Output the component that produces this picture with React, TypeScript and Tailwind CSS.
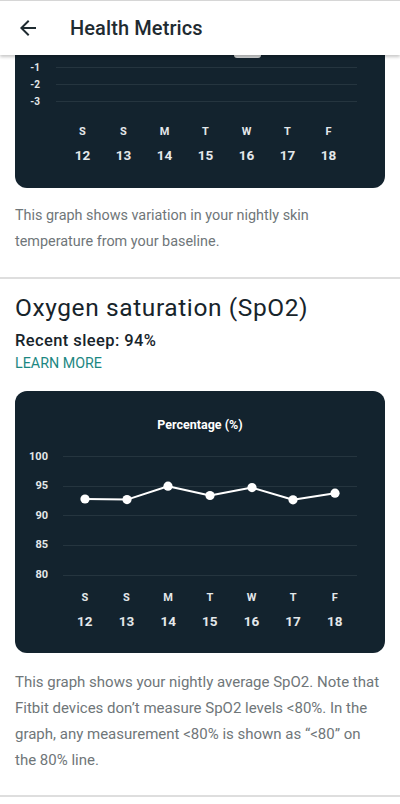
import React from "react";

const days = ["S", "S", "M", "T", "W", "T", "F"];
const dates = ["12", "13", "14", "15", "16", "17", "18"];

const spo2 = [
  { x: 70, y: 57 },
  { x: 112, y: 57.6 },
  { x: 153, y: 44.2 },
  { x: 195, y: 53.5 },
  { x: 237, y: 45.6 },
  { x: 278, y: 57.8 },
  { x: 320, y: 51.2 },
];

const DayAxis = ({ offset, col }: { offset: string; col: string }) => (
  <div className={offset}>
    <div className="flex">
      {days.map((d, i) => (
        <div key={`d${i}`} className={`${col} text-center text-[11px] leading-[14px] font-bold text-[#e4e8ea]`}>
          {d}
        </div>
      ))}
    </div>
    <div className="flex mt-[8px]">
      {dates.map((d) => (
        <div key={d} className={`${col} text-center text-[13.5px] leading-[16px] font-bold text-[#e4e8ea]`}>
          {d}
        </div>
      ))}
    </div>
  </div>
);

export default function App() {
  return (
    <div className="w-[400px] min-h-[804px] bg-white font-['Roboto',sans-serif] overflow-hidden">
      <header className="relative z-10 h-[55px] bg-white border-t border-[#d6d6d6] shadow-[0_2px_3px_rgba(0,0,0,0.22)] flex items-center">
        <div className="w-[70px] pl-[16px] flex items-center">
          <svg width="24" height="24" viewBox="0 0 24 24" fill="#1f2b31">
            <path d="M20 11H7.83l5.59-5.59L12 4l-8 8 8 8 1.41-1.41L7.83 13H20v-2z" />
          </svg>
        </div>
        <h1 className="text-[20px] font-medium text-[#1f2b31] tracking-[0.1px]">Health Metrics</h1>
      </header>

      <main className="px-[15px]">
        {/* skin temperature card, scrolled partly under the header */}
        <div className="bg-[#13232e] rounded-b-[12px] pb-[25px]">
          <div className="ml-[219px] w-[27px] h-[3px] rounded-b-[3px] bg-[#d2d4d5]" />
          <div className="pt-[1px]">
            {["-1", "-2", "-3"].map((l) => (
              <div key={l} className="flex items-center h-[17px]">
                <span className="w-[25px] text-right text-[10px] font-bold text-[#e4e8ea]">{l}</span>
                <div className="ml-[16px] mr-[28px] flex-1 h-px bg-[#25353f]" />
              </div>
            ))}
          </div>
          <DayAxis offset="mt-[15px] pl-[47px]" col="w-[41px]" />
        </div>

        <p className="mt-[15px] text-[14.4px] leading-[26px] text-[#6f7679]">
          This graph shows variation in your nightly skin temperature from your baseline.
        </p>
      </main>

      <div className="mt-[22px] h-[2px] bg-[#dedede]" />

      <section className="px-[15px]">
        <h2 className="mt-[14px] text-[24.5px] leading-[30px] tracking-[0.6px] text-[#17242b]">
          Oxygen saturation (SpO2)
        </h2>
        <div className="mt-[8px] text-[16.5px] leading-[20px] tracking-[0.4px] font-medium text-[#17242b]">
          Recent sleep: 94%
        </div>
        <div className="mt-[3px] text-[14.3px] leading-[18px] text-[#1c8782]">LEARN MORE</div>

        <div className="mt-[19px] bg-[#13232e] rounded-[12px] pt-[26px] pb-[24px]">
          <div className="text-center text-[12.5px] leading-[16px] font-bold text-white">Percentage (%)</div>
          <div className="relative mt-[9px]">
            {["100", "95", "90", "85", "80"].map((l) => (
              <div key={l} className="flex items-center h-[29.6px]">
                <span className="w-[33px] text-right text-[11px] font-bold text-[#e4e8ea]">{l}</span>
                <div className="ml-[15px] mr-[28px] flex-1 h-px bg-[#25353f]" />
              </div>
            ))}
            <svg className="absolute left-0 top-0" width="369" height="148">
              <polyline
                points={spo2.map((p) => `${p.x},${p.y}`).join(" ")}
                fill="none"
                stroke="#ffffff"
                strokeWidth="2"
                strokeLinejoin="round"
              />
              {spo2.map((p, i) => (
                <circle key={i} cx={p.x} cy={p.y} r="4.6" fill="#ffffff" />
              ))}
            </svg>
          </div>
          <DayAxis offset="mt-[1px] pl-[49px]" col="w-[41.67px]" />
        </div>

        <p className="mt-[16px] text-[15px] leading-[26px] text-[#6f7679]">
          This graph shows your nightly average SpO2. Note that Fitbit devices don’t measure SpO2 levels &lt;80%. In the
          graph, any measurement &lt;80% is shown as “&lt;80” on the 80% line.
        </p>
      </section>

      <div className="mt-[22px] h-[2px] bg-[#dedede]" />
    </div>
  );
}
